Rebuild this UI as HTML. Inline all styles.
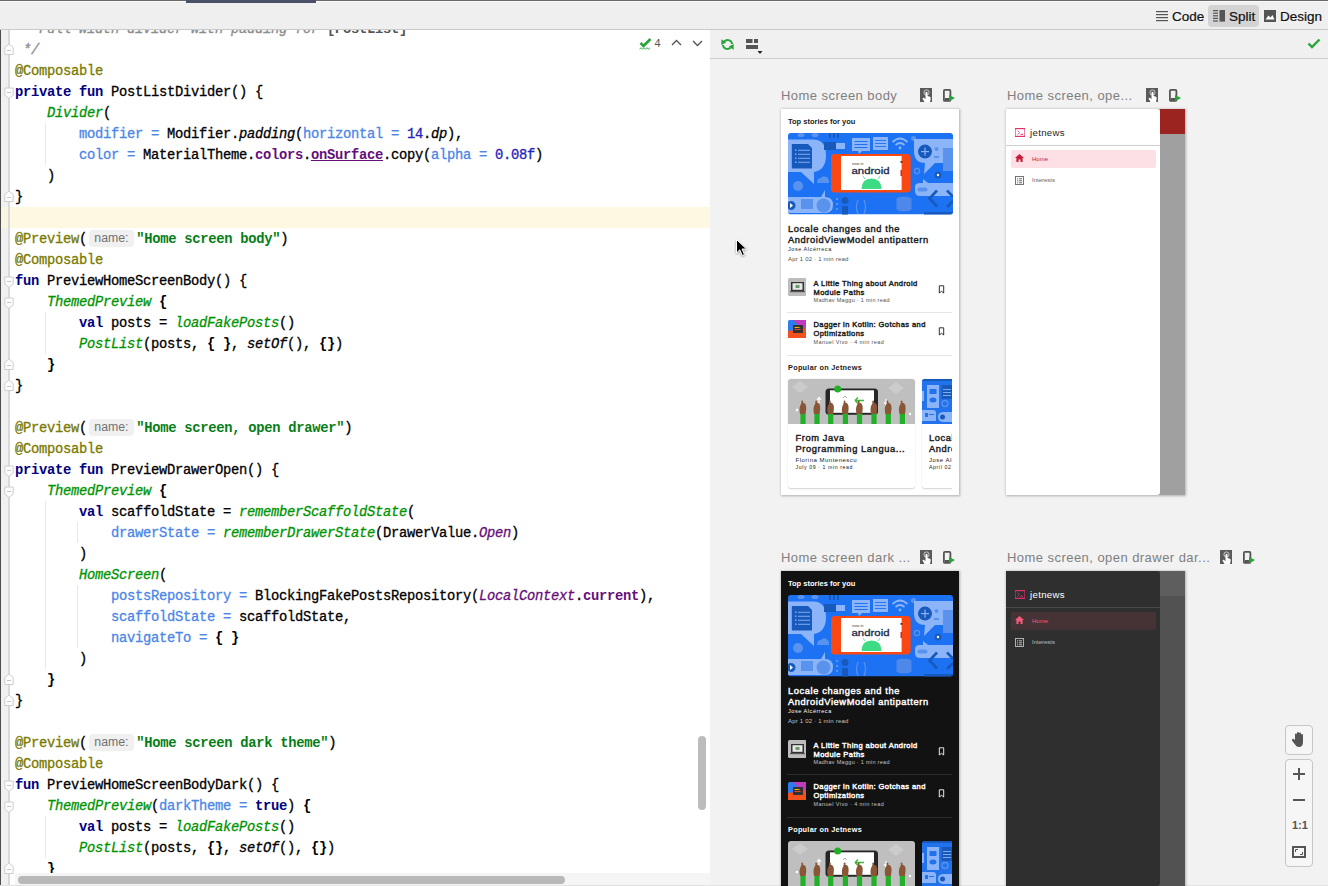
<!DOCTYPE html>
<html><head><meta charset="utf-8">
<style>
*{margin:0;padding:0;box-sizing:border-box}
html,body{width:1328px;height:886px;overflow:hidden;background:#f2f2f2;font-family:"Liberation Sans",sans-serif}
.a{position:absolute}
#topbar{position:absolute;left:0;top:0;width:1328px;height:30px;background:#efefef;border-top:1px solid #6a6a6a;border-bottom:1px solid #c9c9c9}
#tabind{position:absolute;left:186px;top:-1px;width:130px;height:3px;background:#4a5068}
#editor{position:absolute;left:0;top:29px;width:710px;height:857px;background:#fff;overflow:hidden}
#lborder{position:absolute;left:0;top:0;width:1px;height:886px;background:#4d4d4d}
#gutter{position:absolute;left:1px;top:29px;width:8px;height:857px;background:#f0f0f0}
#gline{position:absolute;left:8.4px;top:29px;width:1.2px;height:857px;background:#d9d9d9}
#code{position:absolute;left:15px;top:18.5px;font-family:"Liberation Mono",monospace;font-size:13.8px;letter-spacing:-0.28px;line-height:21px;color:#000;-webkit-text-stroke:0.3px}
.ln{height:21px;white-space:pre}
.cm{color:#8c8c8c;font-style:italic}
.an{color:#7a7a00}
.kw{color:#000080;font-weight:bold;-webkit-text-stroke:0}
.fc{color:#009400;font-style:italic}
.na{color:#4a86e8}
.nu{color:#2222bb}
.st{color:#067d17;font-weight:bold;-webkit-text-stroke:0}
.pr{color:#660e7a;font-weight:bold;-webkit-text-stroke:0}
.pi{color:#660e7a;font-style:italic}
.it{font-style:italic}
.b{font-weight:bold;-webkit-text-stroke:0}
.hint{display:inline-block;font-family:"Liberation Sans",sans-serif;font-size:12.3px;color:#727272;background:#f0f0f0;border-radius:4px;height:17px;line-height:17px;padding:0 5.3px;margin:0 2.5px 0 2px;vertical-align:1px;-webkit-text-stroke:0;letter-spacing:0}
#curline{position:absolute;left:1px;top:207px;width:709px;height:21px;background:#fdf8e2}
#ptool{position:absolute;left:710px;top:30px;width:618px;height:29px;background:#f0f0f0;border-bottom:1px solid #cdcdcd}
.lbl{position:absolute;font-size:13px;line-height:15px;color:#7f7f7f;white-space:nowrap;letter-spacing:0.45px}
.frame{position:absolute;overflow:hidden;box-shadow:0 0 2.5px 0.5px rgba(0,0,0,0.28)}
.t{position:absolute;white-space:nowrap;line-height:1}
.sb{font-weight:bold}
.sm{font-weight:normal;-webkit-text-stroke:0.42px}
</style></head><body>
<div id="editor"></div>
<div id="curline"></div>
<div class="a" style="left:45px;top:123px;width:1px;height:42px;background:#e8e8e8"></div>
<div class="a" style="left:45px;top:312px;width:1px;height:42px;background:#e8e8e8"></div>
<div class="a" style="left:45px;top:501px;width:1px;height:168px;background:#e8e8e8"></div>
<div class="a" style="left:77px;top:522px;width:1px;height:21px;background:#e8e8e8"></div>
<div class="a" style="left:77px;top:585px;width:1px;height:63px;background:#e8e8e8"></div>
<div class="a" style="left:45px;top:816px;width:1px;height:42px;background:#e8e8e8"></div>
<div id="code">
<div class="ln"><span class="cm"> * Full width divider with padding for </span><span class="cm b" style="color:#555;font-style:normal">[PostList]</span></div>
<div class="ln"><span class="cm"> */</span></div>
<div class="ln"><span class="an">@Composable</span></div>
<div class="ln"><span class="kw">private fun</span> PostListDivider() {</div>
<div class="ln">    <span class="fc">Divider</span>(</div>
<div class="ln">        <span class="na">modifier =</span> Modifier.<span class="it">padding</span>(<span class="na">horizontal =</span> <span class="nu">14</span>.<span class="it">dp</span>),</div>
<div class="ln">        <span class="na">color =</span> MaterialTheme.<span class="pr">colors</span>.<span class="pr" style="text-decoration:underline">onSurface</span>.copy(<span class="na">alpha =</span> <span class="nu">0.08f</span>)</div>
<div class="ln">    )</div>
<div class="ln">}</div>
<div class="ln"></div>
<div class="ln"><span class="an">@Preview</span>(<span class="hint">name:</span><span class="st">"Home screen body"</span>)</div>
<div class="ln"><span class="an">@Composable</span></div>
<div class="ln"><span class="kw">fun</span> PreviewHomeScreenBody() {</div>
<div class="ln">    <span class="fc">ThemedPreview</span> <span class="b">{</span></div>
<div class="ln">        <span class="kw">val</span> posts = <span class="fc">loadFakePosts</span>()</div>
<div class="ln">        <span class="fc">PostList</span>(posts, <span class="b">{ }</span>, <span class="it">setOf</span>(), <span class="b">{}</span>)</div>
<div class="ln">    <span class="b">}</span></div>
<div class="ln">}</div>
<div class="ln"></div>
<div class="ln"><span class="an">@Preview</span>(<span class="hint">name:</span><span class="st">"Home screen, open drawer"</span>)</div>
<div class="ln"><span class="an">@Composable</span></div>
<div class="ln"><span class="kw">private fun</span> PreviewDrawerOpen() {</div>
<div class="ln">    <span class="fc">ThemedPreview</span> <span class="b">{</span></div>
<div class="ln">        <span class="kw">val</span> scaffoldState = <span class="fc">rememberScaffoldState</span>(</div>
<div class="ln">            <span class="na">drawerState =</span> <span class="fc">rememberDrawerState</span>(DrawerValue.<span class="pi">Open</span>)</div>
<div class="ln">        )</div>
<div class="ln">        <span class="fc">HomeScreen</span>(</div>
<div class="ln">            <span class="na">postsRepository =</span> BlockingFakePostsRepository(<span class="pi">LocalContext</span>.<span class="pr">current</span>),</div>
<div class="ln">            <span class="na">scaffoldState =</span> scaffoldState,</div>
<div class="ln">            <span class="na">navigateTo =</span> <span class="b">{ }</span></div>
<div class="ln">        )</div>
<div class="ln">    <span class="b">}</span></div>
<div class="ln">}</div>
<div class="ln"></div>
<div class="ln"><span class="an">@Preview</span>(<span class="hint">name:</span><span class="st">"Home screen dark theme"</span>)</div>
<div class="ln"><span class="an">@Composable</span></div>
<div class="ln"><span class="kw">fun</span> PreviewHomeScreenBodyDark() {</div>
<div class="ln">    <span class="fc">ThemedPreview</span>(<span class="na">darkTheme =</span> <span class="kw">true</span>) <span class="b">{</span></div>
<div class="ln">        <span class="kw">val</span> posts = <span class="fc">loadFakePosts</span>()</div>
<div class="ln">        <span class="fc">PostList</span>(posts, <span class="b">{}</span>, <span class="it">setOf</span>(), <span class="b">{}</span>)</div>
<div class="ln">    <span class="b">}</span></div>
</div>

<div id="gutter"></div>
<div id="curg" class="a" style="left:1px;top:207px;width:8px;height:21px;background:#f9f5e3"></div>
<div id="gline"></div>
<svg class="a" style="left:4px;top:42.8px" width="10" height="13" viewBox="0 0 10 13"><path d="M0.8 11.5 H9.2 V4.5 L5 1 L0.8 4.5 Z" fill="#fdfdfd" stroke="#cdcdcd" stroke-width="1"/><rect x="3" y="7" width="4" height="1" fill="#c4c4c4"/></svg>
<svg class="a" style="left:4px;top:87px" width="10" height="13" viewBox="0 0 10 13"><path d="M0.8 1 H9.2 V8 L5 11.5 L0.8 8 Z" fill="#fdfdfd" stroke="#cdcdcd" stroke-width="1"/><rect x="3" y="5" width="4" height="1" fill="#c4c4c4"/></svg>
<svg class="a" style="left:4px;top:189.8px" width="10" height="13" viewBox="0 0 10 13"><path d="M0.8 11.5 H9.2 V4.5 L5 1 L0.8 4.5 Z" fill="#fdfdfd" stroke="#cdcdcd" stroke-width="1"/><rect x="3" y="7" width="4" height="1" fill="#c4c4c4"/></svg>
<svg class="a" style="left:4px;top:276px" width="10" height="13" viewBox="0 0 10 13"><path d="M0.8 1 H9.2 V8 L5 11.5 L0.8 8 Z" fill="#fdfdfd" stroke="#cdcdcd" stroke-width="1"/><rect x="3" y="5" width="4" height="1" fill="#c4c4c4"/></svg>
<svg class="a" style="left:4px;top:297px" width="10" height="13" viewBox="0 0 10 13"><path d="M0.8 1 H9.2 V8 L5 11.5 L0.8 8 Z" fill="#fdfdfd" stroke="#cdcdcd" stroke-width="1"/><rect x="3" y="5" width="4" height="1" fill="#c4c4c4"/></svg>
<svg class="a" style="left:4px;top:357.8px" width="10" height="13" viewBox="0 0 10 13"><path d="M0.8 11.5 H9.2 V4.5 L5 1 L0.8 4.5 Z" fill="#fdfdfd" stroke="#cdcdcd" stroke-width="1"/><rect x="3" y="7" width="4" height="1" fill="#c4c4c4"/></svg>
<svg class="a" style="left:4px;top:378.8px" width="10" height="13" viewBox="0 0 10 13"><path d="M0.8 11.5 H9.2 V4.5 L5 1 L0.8 4.5 Z" fill="#fdfdfd" stroke="#cdcdcd" stroke-width="1"/><rect x="3" y="7" width="4" height="1" fill="#c4c4c4"/></svg>
<svg class="a" style="left:4px;top:465px" width="10" height="13" viewBox="0 0 10 13"><path d="M0.8 1 H9.2 V8 L5 11.5 L0.8 8 Z" fill="#fdfdfd" stroke="#cdcdcd" stroke-width="1"/><rect x="3" y="5" width="4" height="1" fill="#c4c4c4"/></svg>
<svg class="a" style="left:4px;top:486px" width="10" height="13" viewBox="0 0 10 13"><path d="M0.8 1 H9.2 V8 L5 11.5 L0.8 8 Z" fill="#fdfdfd" stroke="#cdcdcd" stroke-width="1"/><rect x="3" y="5" width="4" height="1" fill="#c4c4c4"/></svg>
<svg class="a" style="left:4px;top:672.8px" width="10" height="13" viewBox="0 0 10 13"><path d="M0.8 11.5 H9.2 V4.5 L5 1 L0.8 4.5 Z" fill="#fdfdfd" stroke="#cdcdcd" stroke-width="1"/><rect x="3" y="7" width="4" height="1" fill="#c4c4c4"/></svg>
<svg class="a" style="left:4px;top:693.8px" width="10" height="13" viewBox="0 0 10 13"><path d="M0.8 11.5 H9.2 V4.5 L5 1 L0.8 4.5 Z" fill="#fdfdfd" stroke="#cdcdcd" stroke-width="1"/><rect x="3" y="7" width="4" height="1" fill="#c4c4c4"/></svg>
<svg class="a" style="left:4px;top:780px" width="10" height="13" viewBox="0 0 10 13"><path d="M0.8 1 H9.2 V8 L5 11.5 L0.8 8 Z" fill="#fdfdfd" stroke="#cdcdcd" stroke-width="1"/><rect x="3" y="5" width="4" height="1" fill="#c4c4c4"/></svg>
<svg class="a" style="left:4px;top:801px" width="10" height="13" viewBox="0 0 10 13"><path d="M0.8 1 H9.2 V8 L5 11.5 L0.8 8 Z" fill="#fdfdfd" stroke="#cdcdcd" stroke-width="1"/><rect x="3" y="5" width="4" height="1" fill="#c4c4c4"/></svg>
<svg class="a" style="left:4px;top:861.8px" width="10" height="13" viewBox="0 0 10 13"><path d="M0.8 11.5 H9.2 V4.5 L5 1 L0.8 4.5 Z" fill="#fdfdfd" stroke="#cdcdcd" stroke-width="1"/><rect x="3" y="7" width="4" height="1" fill="#c4c4c4"/></svg>
<div id="lborder"></div>
<svg class="a" style="left:639px;top:38px" width="13" height="12" viewBox="0 0 13 12">
<path d="M1.5 5 L4.5 8 L11.5 1" stroke="#27a33a" stroke-width="2.6" fill="none"/>
<path d="M0.5 11 L2 9.8 L3.5 11 L5 9.8 L6.5 11 L8 9.8 L9.5 11 L11 9.8" stroke="#27a33a" stroke-width="0.9" fill="none"/></svg>
<div class="t" style="left:654.5px;top:38px;font-size:11px;color:#555">4</div>
<svg class="a" style="left:671px;top:39px" width="11" height="7" viewBox="0 0 11 7"><path d="M1 6 L5.5 1.5 L10 6" stroke="#555" stroke-width="1.4" fill="none"/></svg>
<svg class="a" style="left:692px;top:40px" width="11" height="7" viewBox="0 0 11 7"><path d="M1 1 L5.5 5.5 L10 1" stroke="#555" stroke-width="1.4" fill="none"/></svg>
<div class="a" style="left:698px;top:736px;width:8px;height:74px;background:#bcbcbc;border-radius:4px"></div>
<div class="a" style="left:15px;top:873px;width:695px;height:13px;background:#f5f5f5"></div>
<div class="a" style="left:18px;top:876px;width:547px;height:8px;background:#b9b9b9;border-radius:4px"></div>
<div class="a" style="left:0;top:885px;width:1328px;height:1px;background:#e2e2e2"></div>

<div id="topbar"><div class="a" style="left:0;top:0;width:1328px;height:1px;background:#fbfbfb"></div><div id="tabind"></div></div>
<svg class="a" style="left:1156px;top:11px" width="13" height="11" viewBox="0 0 13 11">
<rect x="0" y="0" width="12" height="1.2" fill="#555"/><rect x="0" y="3" width="12" height="1.2" fill="#555"/><rect x="0" y="6" width="12" height="1.2" fill="#555"/><rect x="0" y="9" width="12" height="1.2" fill="#555"/></svg>
<div class="t" style="left:1172px;top:10px;font-size:13.5px;color:#111;-webkit-text-stroke:0.2px">Code</div>
<div class="a" style="left:1208px;top:5px;width:51px;height:21.5px;background:#d3d3d3;border-radius:4px"></div>
<svg class="a" style="left:1213px;top:10px" width="13" height="12" viewBox="0 0 13 12">
<rect x="0" y="0" width="5" height="1.2" fill="#555"/><rect x="0" y="2.6" width="5" height="1.2" fill="#555"/><rect x="0" y="5.2" width="5" height="1.2" fill="#555"/><rect x="0" y="7.8" width="5" height="1.2" fill="#555"/><rect x="0" y="10.4" width="5" height="1.2" fill="#555"/>
<rect x="6.5" y="0" width="5.5" height="11.6" fill="#555"/></svg>
<div class="t" style="left:1229px;top:10px;font-size:13.5px;color:#111;-webkit-text-stroke:0.2px">Split</div>
<svg class="a" style="left:1264px;top:10px" width="13" height="12" viewBox="0 0 13 12">
<rect x="0" y="0" width="12" height="12" fill="#555"/><path d="M1.5 9.5 L4.5 5.5 L6.5 7.5 L8.5 5 L10.5 9.5 Z" fill="#fff"/></svg>
<div class="t" style="left:1280px;top:10px;font-size:13.5px;color:#111;-webkit-text-stroke:0.2px">Design</div>

<div id="ptool"></div>
<svg class="a" style="left:721px;top:37.5px" width="13" height="13" viewBox="0 0 13 13">
<path d="M2.6 4.2 A4.6 4.6 0 0 1 11.1 6" stroke="#27a33a" stroke-width="1.9" fill="none"/>
<path d="M10.4 8.8 A4.6 4.6 0 0 1 1.9 7" stroke="#27a33a" stroke-width="1.9" fill="none"/>
<path d="M0.3 1.2 L5.2 4.6 L0.3 7 Z" fill="#27a33a"/>
<path d="M12.7 11.8 L7.8 8.4 L12.7 6 Z" fill="#27a33a"/>
</svg>
<svg class="a" style="left:745.5px;top:39px" width="18" height="16" viewBox="0 0 18 16">
<rect x="0" y="0" width="6.5" height="4" fill="#555"/><rect x="8" y="0" width="4" height="4" fill="#555"/>
<rect x="0" y="6" width="12" height="4" fill="#555"/>
<path d="M11.5 12 L16.5 12 L14 15 Z" fill="#222"/>
</svg>
<svg class="a" style="left:1307px;top:38px" width="14" height="11" viewBox="0 0 14 11"><path d="M1.5 5.5 L5 9 L12.5 1.5" stroke="#27a33a" stroke-width="2.4" fill="none"/></svg>
<div class="lbl" style="left:781px;top:88px">Home screen body</div>
<svg class="a" style="left:920px;top:88px" width="13" height="14" viewBox="0 0 13 14">
<rect x="0" y="0" width="12" height="14" fill="#5a5a5a"/>
<circle cx="6.5" cy="4.5" r="2.6" fill="none" stroke="#e6e6e6" stroke-width="0.8"/>
<path d="M5.5 4.2 Q6.5 3.2 7.5 4.2 V8 L10 8.8 Q11 9.2 10.6 11 L10 14 H4.5 L2.5 10.5 Q2.8 9.5 4 10 L5.5 11 Z" fill="#ffffff"/>
</svg>
<svg class="a" style="left:943px;top:89px" width="13" height="13" viewBox="0 0 13 13">
<rect x="0.9" y="0.9" width="6.5" height="11" rx="1" fill="none" stroke="#555" stroke-width="1.8"/>
<rect x="2" y="9" width="4" height="2.5" fill="#555"/>
<path d="M6 6 L12 9 L6 12.5 Z" fill="#27a33a"/>
</svg>
<div class="lbl" style="left:1007px;top:88px">Home screen, ope...</div>
<svg class="a" style="left:1146px;top:88px" width="13" height="14" viewBox="0 0 13 14">
<rect x="0" y="0" width="12" height="14" fill="#5a5a5a"/>
<circle cx="6.5" cy="4.5" r="2.6" fill="none" stroke="#e6e6e6" stroke-width="0.8"/>
<path d="M5.5 4.2 Q6.5 3.2 7.5 4.2 V8 L10 8.8 Q11 9.2 10.6 11 L10 14 H4.5 L2.5 10.5 Q2.8 9.5 4 10 L5.5 11 Z" fill="#ffffff"/>
</svg>
<svg class="a" style="left:1169px;top:89px" width="13" height="13" viewBox="0 0 13 13">
<rect x="0.9" y="0.9" width="6.5" height="11" rx="1" fill="none" stroke="#555" stroke-width="1.8"/>
<rect x="2" y="9" width="4" height="2.5" fill="#555"/>
<path d="M6 6 L12 9 L6 12.5 Z" fill="#27a33a"/>
</svg>
<div class="lbl" style="left:781px;top:550px">Home screen dark ...</div>
<svg class="a" style="left:920px;top:550px" width="13" height="14" viewBox="0 0 13 14">
<rect x="0" y="0" width="12" height="14" fill="#5a5a5a"/>
<circle cx="6.5" cy="4.5" r="2.6" fill="none" stroke="#e6e6e6" stroke-width="0.8"/>
<path d="M5.5 4.2 Q6.5 3.2 7.5 4.2 V8 L10 8.8 Q11 9.2 10.6 11 L10 14 H4.5 L2.5 10.5 Q2.8 9.5 4 10 L5.5 11 Z" fill="#ffffff"/>
</svg>
<svg class="a" style="left:943px;top:551px" width="13" height="13" viewBox="0 0 13 13">
<rect x="0.9" y="0.9" width="6.5" height="11" rx="1" fill="none" stroke="#555" stroke-width="1.8"/>
<rect x="2" y="9" width="4" height="2.5" fill="#555"/>
<path d="M6 6 L12 9 L6 12.5 Z" fill="#27a33a"/>
</svg>
<div class="lbl" style="left:1007px;top:550px">Home screen, open drawer dar...</div>
<svg class="a" style="left:1220px;top:550px" width="13" height="14" viewBox="0 0 13 14">
<rect x="0" y="0" width="12" height="14" fill="#5a5a5a"/>
<circle cx="6.5" cy="4.5" r="2.6" fill="none" stroke="#e6e6e6" stroke-width="0.8"/>
<path d="M5.5 4.2 Q6.5 3.2 7.5 4.2 V8 L10 8.8 Q11 9.2 10.6 11 L10 14 H4.5 L2.5 10.5 Q2.8 9.5 4 10 L5.5 11 Z" fill="#ffffff"/>
</svg>
<svg class="a" style="left:1243px;top:551px" width="13" height="13" viewBox="0 0 13 13">
<rect x="0.9" y="0.9" width="6.5" height="11" rx="1" fill="none" stroke="#555" stroke-width="1.8"/>
<rect x="2" y="9" width="4" height="2.5" fill="#555"/>
<path d="M6 6 L12 9 L6 12.5 Z" fill="#27a33a"/>
</svg>
<div class="frame" style="left:781px;top:109px;width:178px;height:386px;background:#ffffff">
<div class="t sb" style="left:7px;top:9px;font-size:7.5px;color:#1c1c1c">Top stories for you</div>
<svg class="a" style="left:6.5px;top:24px" width="165" height="81.5" viewBox="0 0 165 81.5">
<defs><clipPath id="hc246"><rect width="165" height="81.5" rx="3"/></clipPath></defs>
<g clip-path="url(#hc246)">
<rect width="165" height="81.5" fill="#1c72f3"/>
<ellipse cx="13" cy="2" rx="3.5" ry="2" fill="#5a93ee"/><ellipse cx="27" cy="2" rx="3.5" ry="2" fill="#5a93ee"/>
<rect x="41" y="0" width="2" height="5" fill="#185abc"/><rect x="45" y="0" width="2" height="5" fill="#185abc"/><rect x="49" y="0" width="2" height="5" fill="#185abc"/>
<path d="M0 6.5 H25 Q38 6.5 38 22 Q38 37 26 39 V51 L13 39 H0 Z" fill="#8cb4f8"/>
<path d="M3.8 11 H20 L24 15 V35.4 H3.8 Z" fill="#185abc"/>
<rect x="7" y="16.5" width="1.4" height="1.4" fill="#8cb4f8"/><rect x="10" y="16.8" width="12" height="0.9" fill="#8cb4f8"/>
<rect x="7" y="20.5" width="1.4" height="1.4" fill="#8cb4f8"/><rect x="10" y="20.8" width="12" height="0.9" fill="#8cb4f8"/>
<rect x="7" y="24.5" width="1.4" height="1.4" fill="#8cb4f8"/><rect x="10" y="24.8" width="12" height="0.9" fill="#8cb4f8"/>
<rect x="7" y="28.5" width="1.4" height="1.4" fill="#8cb4f8"/><rect x="10" y="28.8" width="12" height="0.9" fill="#8cb4f8"/>
<rect x="36" y="9" width="12" height="8" fill="#185abc"/><rect x="48" y="10" width="9" height="6" fill="#8cb4f8"/>
<path d="M64 5 H82 V18 H74 L71 21 L70 18 H64 Z" fill="#8cb4f8"/>
<rect x="66.5" y="8" width="13" height="1" fill="#1c72f3"/><rect x="66.5" y="11" width="13" height="1" fill="#1c72f3"/><rect x="66.5" y="14" width="13" height="1" fill="#1c72f3"/>
<rect x="85" y="4" width="15" height="13" fill="#8cb4f8"/>
<rect x="87" y="7" width="11" height="0.9" fill="#1c72f3"/><rect x="87" y="10" width="11" height="0.9" fill="#1c72f3"/><rect x="87" y="13" width="11" height="0.9" fill="#1c72f3"/>
<path d="M104.5 9 Q112 2 119.5 9" stroke="#8cb4f8" stroke-width="1.8" fill="none"/><path d="M107.5 12 Q112 8 116.5 12" stroke="#8cb4f8" stroke-width="1.8" fill="none"/><circle cx="112" cy="15" r="1.4" fill="#8cb4f8"/>
<circle cx="125.5" cy="5.5" r="2.5" fill="#5a93ee"/>
<circle cx="10" cy="53" r="5" fill="#5a93ee"/>
<path d="M29 50 Q29 45 33 45 Q35 42 38 44 Q41 44 41 50 Z" fill="#5a93ee"/>
<path d="M0 64 H33 L37 57 V64 Q45 64 45 72 Q45 80 37 80 H0 Z" fill="#8cb4f8"/>
<circle cx="3" cy="72.5" r="4.5" fill="#185abc"/><path d="M2 70 L5 72.5 L2 75 Z" fill="#fff"/>
<rect x="13" y="66" width="12" height="10" fill="#5a93ee"/>
<circle cx="35.5" cy="72.5" r="7" fill="#5a93ee"/>
<circle cx="57" cy="67.5" r="3.5" fill="#185abc"/><rect x="54" y="73" width="6" height="9" fill="#185abc"/>
<rect x="48" y="65" width="2" height="2" fill="#5a93ee"/><rect x="48" y="70" width="2" height="2" fill="#5a93ee"/><rect x="48" y="75" width="2" height="2" fill="#5a93ee"/>
<path d="M70 67 Q67 74 70 81" stroke="#5a93ee" stroke-width="1.2" fill="none"/><path d="M76 67 Q79 74 76 81" stroke="#5a93ee" stroke-width="1.2" fill="none"/>
<path d="M126 6 H165 V30 H147 L136 41 L137 30 Q126 30 126 18 Z" fill="#8cb4f8"/>
<circle cx="137" cy="18.6" r="7" fill="#185abc"/><rect x="133" y="18" width="8" height="1.2" fill="#8cb4f8"/><rect x="136.4" y="14.6" width="1.2" height="8" fill="#8cb4f8"/>
<circle cx="148.5" cy="16" r="2" fill="#5a93ee"/><rect x="146" y="23" width="5" height="2" fill="#5a93ee"/>
<rect x="155" y="15" width="10" height="23" fill="#5a93ee"/>
<circle cx="129" cy="38" r="2.6" fill="none" stroke="#5a93ee" stroke-width="1.2"/>
<circle cx="150" cy="42" r="3.5" fill="#185abc"/><circle cx="150" cy="42" r="1.2" fill="#fff"/>
<path d="M127 54 Q127 50 132 50 H135 L135 46 L140 50 H165 V63 H132 Q127 63 127 58 Z" fill="#8cb4f8"/>
<rect x="129.5" y="54.5" width="10" height="4" rx="2" fill="#5a93ee"/>
<path d="M149 57.5 L141.5 65.5 L149 73.5" stroke="#185abc" stroke-width="2.6" fill="none"/>
<path d="M159 57.5 L165 63.5 M165 68 L159 74" stroke="#185abc" stroke-width="2.6" fill="none"/>
<ellipse cx="116" cy="66" rx="7.5" ry="2.5" fill="#4d88ea"/><rect x="108.5" y="66" width="15" height="10" fill="#4d88ea"/><ellipse cx="116" cy="76" rx="7.5" ry="2.5" fill="#4d88ea"/>
<rect x="136" y="79" width="29" height="3" fill="#185abc"/>
<rect x="43" y="21" width="79.7" height="38.4" rx="4" fill="#fb4812"/>
<rect x="53" y="23" width="60.6" height="34" fill="#ffffff"/>
<rect x="112.5" y="28" width="1.8" height="1.8" fill="#333"/><rect x="112.5" y="37" width="1.5" height="6" fill="#b33"/>
<text x="64" y="31.5" font-family="Liberation Sans" font-size="4" fill="#444">now in</text>
<text x="63.5" y="40.5" font-family="Liberation Sans" font-size="9.2" fill="#1b2d45" stroke="#1b2d45" stroke-width="0.3" textLength="38" lengthAdjust="spacingAndGlyphs">android</text>
<path d="M73.5 56 Q73.5 45.5 83.5 45.5 Q93.5 45.5 93.5 56 Z" fill="#3ddc84"/>
<path d="M77 46 L75 43 M90 46 L92 43" stroke="#3ddc84" stroke-width="0.8"/>
</g></svg>
<div class="t sm" style="left:7px;top:115px;font-size:9.3px;line-height:10.6px;letter-spacing:0.6px;color:#1c1c1c">Locale changes and the<br>AndroidViewModel antipattern</div>
<div class="t" style="left:7px;top:138px;font-size:5.5px;letter-spacing:0.55px;color:#1c1c1c">Jose Alcérreca</div>
<div class="t" style="left:7px;top:146.5px;font-size:6px;letter-spacing:0.2px;color:#505050">Apr 1 02 · 1 min read</div>
<svg class="a" style="left:6.5px;top:168.7px" width="18.5" height="18" viewBox="0 0 18.5 18">
<rect width="18.5" height="18" rx="1.5" fill="#bdbdbd"/>
<rect x="3" y="4" width="13" height="9" fill="#333"/><rect x="4.5" y="5.2" width="10" height="6.6" fill="#e8e8e8"/>
<rect x="7.5" y="7" width="4" height="3" fill="#6a9a6a"/><rect x="2" y="13" width="15" height="1.2" fill="#555"/>
</svg>
<div class="t sm" style="left:32.5px;top:169.5px;font-size:7.5px;line-height:9px;letter-spacing:0.45px;color:#1c1c1c">A Little Thing about Android<br>Module Paths</div>
<div class="t" style="left:32.5px;top:189px;font-size:5.5px;letter-spacing:0.3px;color:#505050">Madhav Maggu · 1 min read</div>
<svg class="a" style="left:156.5px;top:175.5px" width="7" height="9" viewBox="0 0 7 9"><path d="M1.3 0.8 H5.7 V8 L3.5 6.3 L1.3 8 Z" fill="none" stroke="#1c1c1c" stroke-width="0.9"/></svg>
<div class="a" style="left:6px;top:203px;width:165px;height:1px;background:#e6e6e6"></div>
<svg class="a" style="left:6.5px;top:210.7px" width="18.5" height="18" viewBox="0 0 18.5 18">
<rect width="18.5" height="18" rx="1.5" fill="#2f7cf0"/>
<path d="M5 0 H18.5 V12 Z" fill="#c23bbd"/>
<path d="M0 11 L18.5 8 V18 H0 Z" fill="#f4511e"/>
<rect x="5" y="5" width="10" height="8" fill="#333"/><rect x="6.5" y="7" width="5" height="1" fill="#f4b400"/><rect x="6.5" y="9" width="6" height="1" fill="#ea4335"/>
</svg>
<div class="t sm" style="left:32.5px;top:212px;font-size:7.5px;line-height:8.5px;letter-spacing:0.42px;color:#1c1c1c">Dagger in Kotlin: Gotchas and<br>Optimizations</div>
<div class="t" style="left:32.5px;top:231px;font-size:5.5px;letter-spacing:0.4px;color:#505050">Manuel Vivo · 4 min read</div>
<svg class="a" style="left:156.5px;top:218px" width="7" height="9" viewBox="0 0 7 9"><path d="M1.3 0.8 H5.7 V8 L3.5 6.3 L1.3 8 Z" fill="none" stroke="#1c1c1c" stroke-width="0.9"/></svg>
<div class="a" style="left:6px;top:245.5px;width:165px;height:1px;background:#e6e6e6"></div>
<div class="t sb" style="left:7px;top:255px;font-size:7.3px;letter-spacing:0.28px;color:#1c1c1c">Popular on Jetnews</div>
<div class="a" style="left:6.5px;top:269.7px;width:127.5px;height:109px;background:#ffffff;border-radius:3px;box-shadow:0 0.5px 1.5px rgba(0,0,0,0.18);overflow:hidden">
<svg class="a" style="left:0;top:0" width="127.5" height="45" viewBox="0 0 127.5 45">
<rect width="127.5" height="45" fill="#bfbfbf"/>
<path d="M12 2 L20 8 L12 14 L4 8 Z M108 3 L116 9 L108 15 L100 9 Z" fill="#cccccc"/>
<rect x="37.5" y="9.5" width="52.5" height="26.2" rx="3.5" fill="#262626"/>
<rect x="42" y="11.3" width="44" height="22.5" fill="#ffffff"/>
<circle cx="49.7" cy="10" r="3.5" fill="#22b02a"/>
<path d="M67 21.5 H76 M67 21.5 L70 18.5 M67 21.5 L70 24.5" stroke="#3bbb3b" stroke-width="1.4" fill="none"/>
<path d="M55 19 L57 17 L59 19 M55 24 L57 26 L59 24" stroke="#999" stroke-width="0.8" fill="none"/>
<path d="M31 24 V19 M29 21 L31 18.5 L33 21 M98 20 V25 M96 23 L98 25.5 L100 23" stroke="#fff" stroke-width="1.1" fill="none"/>
<circle cx="9" cy="31" r="1.2" fill="#fff"/><circle cx="122" cy="35" r="1.2" fill="#fff"/>
<rect x="12.4" y="34.5" width="5.2" height="11" fill="#22b02a"/><path d="M12 35 Q10.8 29 12.5 26 Q14 23 16 24 Q18.5 25 18.2 30 L17.6 35 Z" fill="#8a5638"/><rect x="13.4" y="21.5" width="1.6" height="4" rx="0.8" fill="#8a5638"/><rect x="26.4" y="34.5" width="5.2" height="11" fill="#22b02a"/><path d="M26 35 Q24.8 29 26.5 26 Q28 23 30 24 Q32.5 25 32.2 30 L31.6 35 Z" fill="#8a5638"/><rect x="27.4" y="21.5" width="1.6" height="4" rx="0.8" fill="#8a5638"/><rect x="40.1" y="34.5" width="5.2" height="11" fill="#22b02a"/><path d="M39.7 35 Q38.5 29 40.2 26 Q41.7 23 43.7 24 Q46.2 25 45.900000000000006 30 L45.300000000000004 35 Z" fill="#8a5638"/><rect x="41.1" y="21.5" width="1.6" height="4" rx="0.8" fill="#8a5638"/><rect x="54.8" y="34.5" width="5.2" height="11" fill="#22b02a"/><path d="M54.4 35 Q53.199999999999996 29 54.9 26 Q56.4 23 58.4 24 Q60.9 25 60.6 30 L60.0 35 Z" fill="#8a5638"/><rect x="55.8" y="21.5" width="1.6" height="4" rx="0.8" fill="#8a5638"/><rect x="68.9" y="34.5" width="5.2" height="11" fill="#22b02a"/><path d="M68.5 35 Q67.3 29 69.0 26 Q70.5 23 72.5 24 Q75.0 25 74.7 30 L74.1 35 Z" fill="#8a5638"/><rect x="69.9" y="21.5" width="1.6" height="4" rx="0.8" fill="#8a5638"/><rect x="83.4" y="34.5" width="5.2" height="11" fill="#22b02a"/><path d="M83 35 Q81.8 29 83.5 26 Q85 23 87 24 Q89.5 25 89.2 30 L88.6 35 Z" fill="#8a5638"/><rect x="84.4" y="21.5" width="1.6" height="4" rx="0.8" fill="#8a5638"/><rect x="97.7" y="34.5" width="5.2" height="11" fill="#22b02a"/><path d="M97.3 35 Q96.1 29 97.8 26 Q99.3 23 101.3 24 Q103.8 25 103.5 30 L102.89999999999999 35 Z" fill="#8a5638"/><rect x="98.7" y="21.5" width="1.6" height="4" rx="0.8" fill="#8a5638"/><rect x="111.80000000000001" y="34.5" width="5.2" height="11" fill="#22b02a"/><path d="M111.4 35 Q110.2 29 111.9 26 Q113.4 23 115.4 24 Q117.9 25 117.60000000000001 30 L117.0 35 Z" fill="#8a5638"/><rect x="112.80000000000001" y="21.5" width="1.6" height="4" rx="0.8" fill="#8a5638"/>
</svg>
<div class="t sm" style="left:8px;top:54px;font-size:9.3px;line-height:11.4px;letter-spacing:0.6px;color:#1c1c1c">From Java<br>Programming Langua...</div>
<div class="t" style="left:8px;top:78px;font-size:6px;letter-spacing:0.5px;color:#1c1c1c">Florina Muntenescu</div>
<div class="t" style="left:8px;top:86.5px;font-size:5.2px;letter-spacing:0.6px;color:#1c1c1c">July 09 · 1 min read</div>
</div>
<div class="a" style="left:141px;top:269.7px;width:60px;height:109px;background:#ffffff;border-radius:3px;box-shadow:0 0.5px 1.5px rgba(0,0,0,0.18);overflow:hidden">
<svg class="a" style="left:0;top:0" width="60" height="45" viewBox="0 0 60 45">
<rect width="60" height="45" fill="#2272ec"/>
<rect x="0" y="0" width="60" height="2" fill="#185abc"/>
<rect x="5" y="6" width="12" height="23" fill="#8cb4f8"/>
<rect x="7.5" y="10" width="7" height="5" fill="#2272ec"/><ellipse cx="11" cy="21" rx="3.5" ry="2.5" fill="#2272ec"/>
<rect x="19.5" y="6" width="11" height="14" fill="#185abc"/>
<rect x="21" y="10" width="8" height="0.9" fill="#8cb4f8"/><rect x="21" y="13" width="8" height="0.9" fill="#8cb4f8"/><rect x="21" y="16" width="8" height="0.9" fill="#8cb4f8"/>
<rect x="0" y="12" width="2" height="10" fill="#8cb4f8"/>
<path d="M0 31 H11 Q14 31 14 34 V42 H0 Z" fill="#8cb4f8"/>
<rect x="3" y="34" width="3" height="4" fill="#2272ec"/><rect x="7" y="35" width="5" height="1" fill="#2272ec"/>
<path d="M16 38 Q16 33 22 33 H30 V43 H22 Q16 43 16 38 Z" fill="#8cb4f8"/>
<circle cx="20.5" cy="38" r="2.5" fill="#185abc"/>
<circle cx="23" cy="24.5" r="3" fill="none" stroke="#5a93ee" stroke-width="1.3"/>
</svg>
<div class="t sm" style="left:7px;top:54px;font-size:9.3px;line-height:11.4px;letter-spacing:0.6px;color:#1c1c1c">Locale<br>AndroidV</div>
<div class="t" style="left:7px;top:78px;font-size:6px;letter-spacing:0.5px;color:#1c1c1c">Jose Alcérreca</div>
<div class="t" style="left:7px;top:86.5px;font-size:5.2px;letter-spacing:0.6px;color:#1c1c1c">April 02 · 1 min read</div>
</div>
<div class="a" style="left:171px;top:260px;width:7px;height:130px;background:#ffffff"></div>
</div>
<div class="frame" style="left:1006px;top:109px;width:179px;height:386px;background:#a0a0a0">
<div class="a" style="left:154px;top:0;width:25px;height:25px;background:#9b2421"></div>
<div class="a" style="left:0;top:0;width:154px;height:386px;background:#ffffff;border-radius:0 3px 3px 0"></div>
<svg class="a" style="left:8.5px;top:19px" width="10" height="9" viewBox="0 0 10 9"><rect x="0" y="0" width="10" height="1.2" fill="#e0306a"/><rect x="0" y="7.8" width="10" height="1.2" fill="#e0306a"/><rect x="0" y="0" width="0.6" height="9" fill="#e0306a"/><rect x="9.4" y="0" width="0.6" height="9" fill="#e0306a"/><path d="M2.5 2.5 L4.5 4.5 L2.5 6.5" stroke="#d040a0" stroke-width="0.8" fill="none"/><rect x="5.5" y="5.8" width="2.5" height="1" fill="#e0306a"/></svg>
<div class="t" style="left:24px;top:19px;font-size:9.6px;letter-spacing:0.35px;color:#1c1c1c">jetnews</div>
<div class="a" style="left:0;top:36px;width:154px;height:1px;background:#d0d0d0"></div>
<div class="a" style="left:5px;top:40.5px;width:144.5px;height:18px;background:#fde0e5;border-radius:2px"></div>
<svg class="a" style="left:9px;top:45px" width="9" height="8" viewBox="0 0 9 8"><path d="M4.5 0 L9 4 H7.6 V8 H5.5 V5.5 H3.5 V8 H1.4 V4 H0 Z" fill="#c21f3a"/></svg>
<div class="t" style="left:26px;top:46.5px;font-size:6px;color:#c21f3a">Home</div>
<svg class="a" style="left:9px;top:66.5px" width="9" height="9" viewBox="0 0 9 9"><rect x="0.5" y="0.5" width="8" height="8" fill="none" stroke="#666666" stroke-width="0.9"/><rect x="2" y="2.3" width="1.2" height="1" fill="#666666"/><rect x="4" y="2.3" width="3" height="1" fill="#666666"/><rect x="2" y="4.3" width="1.2" height="1" fill="#666666"/><rect x="4" y="4.3" width="3" height="1" fill="#666666"/><rect x="2" y="6.3" width="1.2" height="1" fill="#666666"/><rect x="4" y="6.3" width="3" height="1" fill="#666666"/></svg>
<div class="t" style="left:26px;top:68px;font-size:6px;color:#666666">Interests</div>
</div>
<div class="frame" style="left:781px;top:571px;width:178px;height:315px;background:#121212">
<div class="t sb" style="left:7px;top:9px;font-size:7.5px;color:#ffffff">Top stories for you</div>
<svg class="a" style="left:6.5px;top:24px" width="165" height="81.5" viewBox="0 0 165 81.5">
<defs><clipPath id="hc246"><rect width="165" height="81.5" rx="3"/></clipPath></defs>
<g clip-path="url(#hc246)">
<rect width="165" height="81.5" fill="#1c72f3"/>
<ellipse cx="13" cy="2" rx="3.5" ry="2" fill="#5a93ee"/><ellipse cx="27" cy="2" rx="3.5" ry="2" fill="#5a93ee"/>
<rect x="41" y="0" width="2" height="5" fill="#185abc"/><rect x="45" y="0" width="2" height="5" fill="#185abc"/><rect x="49" y="0" width="2" height="5" fill="#185abc"/>
<path d="M0 6.5 H25 Q38 6.5 38 22 Q38 37 26 39 V51 L13 39 H0 Z" fill="#8cb4f8"/>
<path d="M3.8 11 H20 L24 15 V35.4 H3.8 Z" fill="#185abc"/>
<rect x="7" y="16.5" width="1.4" height="1.4" fill="#8cb4f8"/><rect x="10" y="16.8" width="12" height="0.9" fill="#8cb4f8"/>
<rect x="7" y="20.5" width="1.4" height="1.4" fill="#8cb4f8"/><rect x="10" y="20.8" width="12" height="0.9" fill="#8cb4f8"/>
<rect x="7" y="24.5" width="1.4" height="1.4" fill="#8cb4f8"/><rect x="10" y="24.8" width="12" height="0.9" fill="#8cb4f8"/>
<rect x="7" y="28.5" width="1.4" height="1.4" fill="#8cb4f8"/><rect x="10" y="28.8" width="12" height="0.9" fill="#8cb4f8"/>
<rect x="36" y="9" width="12" height="8" fill="#185abc"/><rect x="48" y="10" width="9" height="6" fill="#8cb4f8"/>
<path d="M64 5 H82 V18 H74 L71 21 L70 18 H64 Z" fill="#8cb4f8"/>
<rect x="66.5" y="8" width="13" height="1" fill="#1c72f3"/><rect x="66.5" y="11" width="13" height="1" fill="#1c72f3"/><rect x="66.5" y="14" width="13" height="1" fill="#1c72f3"/>
<rect x="85" y="4" width="15" height="13" fill="#8cb4f8"/>
<rect x="87" y="7" width="11" height="0.9" fill="#1c72f3"/><rect x="87" y="10" width="11" height="0.9" fill="#1c72f3"/><rect x="87" y="13" width="11" height="0.9" fill="#1c72f3"/>
<path d="M104.5 9 Q112 2 119.5 9" stroke="#8cb4f8" stroke-width="1.8" fill="none"/><path d="M107.5 12 Q112 8 116.5 12" stroke="#8cb4f8" stroke-width="1.8" fill="none"/><circle cx="112" cy="15" r="1.4" fill="#8cb4f8"/>
<circle cx="125.5" cy="5.5" r="2.5" fill="#5a93ee"/>
<circle cx="10" cy="53" r="5" fill="#5a93ee"/>
<path d="M29 50 Q29 45 33 45 Q35 42 38 44 Q41 44 41 50 Z" fill="#5a93ee"/>
<path d="M0 64 H33 L37 57 V64 Q45 64 45 72 Q45 80 37 80 H0 Z" fill="#8cb4f8"/>
<circle cx="3" cy="72.5" r="4.5" fill="#185abc"/><path d="M2 70 L5 72.5 L2 75 Z" fill="#fff"/>
<rect x="13" y="66" width="12" height="10" fill="#5a93ee"/>
<circle cx="35.5" cy="72.5" r="7" fill="#5a93ee"/>
<circle cx="57" cy="67.5" r="3.5" fill="#185abc"/><rect x="54" y="73" width="6" height="9" fill="#185abc"/>
<rect x="48" y="65" width="2" height="2" fill="#5a93ee"/><rect x="48" y="70" width="2" height="2" fill="#5a93ee"/><rect x="48" y="75" width="2" height="2" fill="#5a93ee"/>
<path d="M70 67 Q67 74 70 81" stroke="#5a93ee" stroke-width="1.2" fill="none"/><path d="M76 67 Q79 74 76 81" stroke="#5a93ee" stroke-width="1.2" fill="none"/>
<path d="M126 6 H165 V30 H147 L136 41 L137 30 Q126 30 126 18 Z" fill="#8cb4f8"/>
<circle cx="137" cy="18.6" r="7" fill="#185abc"/><rect x="133" y="18" width="8" height="1.2" fill="#8cb4f8"/><rect x="136.4" y="14.6" width="1.2" height="8" fill="#8cb4f8"/>
<circle cx="148.5" cy="16" r="2" fill="#5a93ee"/><rect x="146" y="23" width="5" height="2" fill="#5a93ee"/>
<rect x="155" y="15" width="10" height="23" fill="#5a93ee"/>
<circle cx="129" cy="38" r="2.6" fill="none" stroke="#5a93ee" stroke-width="1.2"/>
<circle cx="150" cy="42" r="3.5" fill="#185abc"/><circle cx="150" cy="42" r="1.2" fill="#fff"/>
<path d="M127 54 Q127 50 132 50 H135 L135 46 L140 50 H165 V63 H132 Q127 63 127 58 Z" fill="#8cb4f8"/>
<rect x="129.5" y="54.5" width="10" height="4" rx="2" fill="#5a93ee"/>
<path d="M149 57.5 L141.5 65.5 L149 73.5" stroke="#185abc" stroke-width="2.6" fill="none"/>
<path d="M159 57.5 L165 63.5 M165 68 L159 74" stroke="#185abc" stroke-width="2.6" fill="none"/>
<ellipse cx="116" cy="66" rx="7.5" ry="2.5" fill="#4d88ea"/><rect x="108.5" y="66" width="15" height="10" fill="#4d88ea"/><ellipse cx="116" cy="76" rx="7.5" ry="2.5" fill="#4d88ea"/>
<rect x="136" y="79" width="29" height="3" fill="#185abc"/>
<rect x="43" y="21" width="79.7" height="38.4" rx="4" fill="#fb4812"/>
<rect x="53" y="23" width="60.6" height="34" fill="#ffffff"/>
<rect x="112.5" y="28" width="1.8" height="1.8" fill="#333"/><rect x="112.5" y="37" width="1.5" height="6" fill="#b33"/>
<text x="64" y="31.5" font-family="Liberation Sans" font-size="4" fill="#444">now in</text>
<text x="63.5" y="40.5" font-family="Liberation Sans" font-size="9.2" fill="#1b2d45" stroke="#1b2d45" stroke-width="0.3" textLength="38" lengthAdjust="spacingAndGlyphs">android</text>
<path d="M73.5 56 Q73.5 45.5 83.5 45.5 Q93.5 45.5 93.5 56 Z" fill="#3ddc84"/>
<path d="M77 46 L75 43 M90 46 L92 43" stroke="#3ddc84" stroke-width="0.8"/>
</g></svg>
<div class="t sm" style="left:7px;top:115px;font-size:9.3px;line-height:10.6px;letter-spacing:0.6px;color:#ffffff">Locale changes and the<br>AndroidViewModel antipattern</div>
<div class="t" style="left:7px;top:138px;font-size:5.5px;letter-spacing:0.55px;color:#ffffff">Jose Alcérreca</div>
<div class="t" style="left:7px;top:146.5px;font-size:6px;letter-spacing:0.2px;color:#c4c4c4">Apr 1 02 · 1 min read</div>
<svg class="a" style="left:6.5px;top:168.7px" width="18.5" height="18" viewBox="0 0 18.5 18">
<rect width="18.5" height="18" rx="1.5" fill="#bdbdbd"/>
<rect x="3" y="4" width="13" height="9" fill="#333"/><rect x="4.5" y="5.2" width="10" height="6.6" fill="#e8e8e8"/>
<rect x="7.5" y="7" width="4" height="3" fill="#6a9a6a"/><rect x="2" y="13" width="15" height="1.2" fill="#555"/>
</svg>
<div class="t sm" style="left:32.5px;top:169.5px;font-size:7.5px;line-height:9px;letter-spacing:0.45px;color:#ffffff">A Little Thing about Android<br>Module Paths</div>
<div class="t" style="left:32.5px;top:189px;font-size:5.5px;letter-spacing:0.3px;color:#c4c4c4">Madhav Maggu · 1 min read</div>
<svg class="a" style="left:156.5px;top:175.5px" width="7" height="9" viewBox="0 0 7 9"><path d="M1.3 0.8 H5.7 V8 L3.5 6.3 L1.3 8 Z" fill="none" stroke="#ffffff" stroke-width="0.9"/></svg>
<div class="a" style="left:6px;top:203px;width:165px;height:1px;background:#2c2c2c"></div>
<svg class="a" style="left:6.5px;top:210.7px" width="18.5" height="18" viewBox="0 0 18.5 18">
<rect width="18.5" height="18" rx="1.5" fill="#2f7cf0"/>
<path d="M5 0 H18.5 V12 Z" fill="#c23bbd"/>
<path d="M0 11 L18.5 8 V18 H0 Z" fill="#f4511e"/>
<rect x="5" y="5" width="10" height="8" fill="#333"/><rect x="6.5" y="7" width="5" height="1" fill="#f4b400"/><rect x="6.5" y="9" width="6" height="1" fill="#ea4335"/>
</svg>
<div class="t sm" style="left:32.5px;top:212px;font-size:7.5px;line-height:8.5px;letter-spacing:0.42px;color:#ffffff">Dagger in Kotlin: Gotchas and<br>Optimizations</div>
<div class="t" style="left:32.5px;top:231px;font-size:5.5px;letter-spacing:0.4px;color:#c4c4c4">Manuel Vivo · 4 min read</div>
<svg class="a" style="left:156.5px;top:218px" width="7" height="9" viewBox="0 0 7 9"><path d="M1.3 0.8 H5.7 V8 L3.5 6.3 L1.3 8 Z" fill="none" stroke="#ffffff" stroke-width="0.9"/></svg>
<div class="a" style="left:6px;top:245.5px;width:165px;height:1px;background:#2c2c2c"></div>
<div class="t sb" style="left:7px;top:255px;font-size:7.3px;letter-spacing:0.28px;color:#ffffff">Popular on Jetnews</div>
<div class="a" style="left:6.5px;top:269.7px;width:127.5px;height:109px;background:#1e1e1e;border-radius:3px;box-shadow:0 0.5px 1.5px rgba(0,0,0,0.18);overflow:hidden">
<svg class="a" style="left:0;top:0" width="127.5" height="45" viewBox="0 0 127.5 45">
<rect width="127.5" height="45" fill="#bfbfbf"/>
<path d="M12 2 L20 8 L12 14 L4 8 Z M108 3 L116 9 L108 15 L100 9 Z" fill="#cccccc"/>
<rect x="37.5" y="9.5" width="52.5" height="26.2" rx="3.5" fill="#262626"/>
<rect x="42" y="11.3" width="44" height="22.5" fill="#ffffff"/>
<circle cx="49.7" cy="10" r="3.5" fill="#22b02a"/>
<path d="M67 21.5 H76 M67 21.5 L70 18.5 M67 21.5 L70 24.5" stroke="#3bbb3b" stroke-width="1.4" fill="none"/>
<path d="M55 19 L57 17 L59 19 M55 24 L57 26 L59 24" stroke="#999" stroke-width="0.8" fill="none"/>
<path d="M31 24 V19 M29 21 L31 18.5 L33 21 M98 20 V25 M96 23 L98 25.5 L100 23" stroke="#fff" stroke-width="1.1" fill="none"/>
<circle cx="9" cy="31" r="1.2" fill="#fff"/><circle cx="122" cy="35" r="1.2" fill="#fff"/>
<rect x="12.4" y="34.5" width="5.2" height="11" fill="#22b02a"/><path d="M12 35 Q10.8 29 12.5 26 Q14 23 16 24 Q18.5 25 18.2 30 L17.6 35 Z" fill="#8a5638"/><rect x="13.4" y="21.5" width="1.6" height="4" rx="0.8" fill="#8a5638"/><rect x="26.4" y="34.5" width="5.2" height="11" fill="#22b02a"/><path d="M26 35 Q24.8 29 26.5 26 Q28 23 30 24 Q32.5 25 32.2 30 L31.6 35 Z" fill="#8a5638"/><rect x="27.4" y="21.5" width="1.6" height="4" rx="0.8" fill="#8a5638"/><rect x="40.1" y="34.5" width="5.2" height="11" fill="#22b02a"/><path d="M39.7 35 Q38.5 29 40.2 26 Q41.7 23 43.7 24 Q46.2 25 45.900000000000006 30 L45.300000000000004 35 Z" fill="#8a5638"/><rect x="41.1" y="21.5" width="1.6" height="4" rx="0.8" fill="#8a5638"/><rect x="54.8" y="34.5" width="5.2" height="11" fill="#22b02a"/><path d="M54.4 35 Q53.199999999999996 29 54.9 26 Q56.4 23 58.4 24 Q60.9 25 60.6 30 L60.0 35 Z" fill="#8a5638"/><rect x="55.8" y="21.5" width="1.6" height="4" rx="0.8" fill="#8a5638"/><rect x="68.9" y="34.5" width="5.2" height="11" fill="#22b02a"/><path d="M68.5 35 Q67.3 29 69.0 26 Q70.5 23 72.5 24 Q75.0 25 74.7 30 L74.1 35 Z" fill="#8a5638"/><rect x="69.9" y="21.5" width="1.6" height="4" rx="0.8" fill="#8a5638"/><rect x="83.4" y="34.5" width="5.2" height="11" fill="#22b02a"/><path d="M83 35 Q81.8 29 83.5 26 Q85 23 87 24 Q89.5 25 89.2 30 L88.6 35 Z" fill="#8a5638"/><rect x="84.4" y="21.5" width="1.6" height="4" rx="0.8" fill="#8a5638"/><rect x="97.7" y="34.5" width="5.2" height="11" fill="#22b02a"/><path d="M97.3 35 Q96.1 29 97.8 26 Q99.3 23 101.3 24 Q103.8 25 103.5 30 L102.89999999999999 35 Z" fill="#8a5638"/><rect x="98.7" y="21.5" width="1.6" height="4" rx="0.8" fill="#8a5638"/><rect x="111.80000000000001" y="34.5" width="5.2" height="11" fill="#22b02a"/><path d="M111.4 35 Q110.2 29 111.9 26 Q113.4 23 115.4 24 Q117.9 25 117.60000000000001 30 L117.0 35 Z" fill="#8a5638"/><rect x="112.80000000000001" y="21.5" width="1.6" height="4" rx="0.8" fill="#8a5638"/>
</svg>
<div class="t sm" style="left:8px;top:54px;font-size:9.3px;line-height:11.4px;letter-spacing:0.6px;color:#ffffff">From Java<br>Programming Langua...</div>
<div class="t" style="left:8px;top:78px;font-size:6px;letter-spacing:0.5px;color:#ffffff">Florina Muntenescu</div>
<div class="t" style="left:8px;top:86.5px;font-size:5.2px;letter-spacing:0.6px;color:#ffffff">July 09 · 1 min read</div>
</div>
<div class="a" style="left:141px;top:269.7px;width:60px;height:109px;background:#1e1e1e;border-radius:3px;box-shadow:0 0.5px 1.5px rgba(0,0,0,0.18);overflow:hidden">
<svg class="a" style="left:0;top:0" width="60" height="45" viewBox="0 0 60 45">
<rect width="60" height="45" fill="#2272ec"/>
<rect x="0" y="0" width="60" height="2" fill="#185abc"/>
<rect x="5" y="6" width="12" height="23" fill="#8cb4f8"/>
<rect x="7.5" y="10" width="7" height="5" fill="#2272ec"/><ellipse cx="11" cy="21" rx="3.5" ry="2.5" fill="#2272ec"/>
<rect x="19.5" y="6" width="11" height="14" fill="#185abc"/>
<rect x="21" y="10" width="8" height="0.9" fill="#8cb4f8"/><rect x="21" y="13" width="8" height="0.9" fill="#8cb4f8"/><rect x="21" y="16" width="8" height="0.9" fill="#8cb4f8"/>
<rect x="0" y="12" width="2" height="10" fill="#8cb4f8"/>
<path d="M0 31 H11 Q14 31 14 34 V42 H0 Z" fill="#8cb4f8"/>
<rect x="3" y="34" width="3" height="4" fill="#2272ec"/><rect x="7" y="35" width="5" height="1" fill="#2272ec"/>
<path d="M16 38 Q16 33 22 33 H30 V43 H22 Q16 43 16 38 Z" fill="#8cb4f8"/>
<circle cx="20.5" cy="38" r="2.5" fill="#185abc"/>
<circle cx="23" cy="24.5" r="3" fill="none" stroke="#5a93ee" stroke-width="1.3"/>
</svg>
<div class="t sm" style="left:7px;top:54px;font-size:9.3px;line-height:11.4px;letter-spacing:0.6px;color:#ffffff">Locale<br>AndroidV</div>
<div class="t" style="left:7px;top:78px;font-size:6px;letter-spacing:0.5px;color:#ffffff">Jose Alcérreca</div>
<div class="t" style="left:7px;top:86.5px;font-size:5.2px;letter-spacing:0.6px;color:#ffffff">April 02 · 1 min read</div>
</div>
<div class="a" style="left:171px;top:260px;width:7px;height:130px;background:#121212"></div>
</div>
<div class="frame" style="left:1006px;top:571px;width:179px;height:315px;background:#525252">
<div class="a" style="left:154px;top:0;width:25px;height:25px;background:#5e5e5e"></div>
<div class="a" style="left:0;top:0;width:154px;height:315px;background:#2f2f2f;border-radius:0 3px 3px 0"></div>
<svg class="a" style="left:8.5px;top:19px" width="10" height="9" viewBox="0 0 10 9"><rect x="0" y="0" width="10" height="1.2" fill="#e0306a"/><rect x="0" y="7.8" width="10" height="1.2" fill="#e0306a"/><rect x="0" y="0" width="0.6" height="9" fill="#e0306a"/><rect x="9.4" y="0" width="0.6" height="9" fill="#e0306a"/><path d="M2.5 2.5 L4.5 4.5 L2.5 6.5" stroke="#d040a0" stroke-width="0.8" fill="none"/><rect x="5.5" y="5.8" width="2.5" height="1" fill="#e0306a"/></svg>
<div class="t" style="left:24px;top:19px;font-size:9.6px;letter-spacing:0.35px;color:#ffffff">jetnews</div>
<div class="a" style="left:0;top:36px;width:154px;height:1px;background:#4a4a4a"></div>
<div class="a" style="left:5px;top:40.5px;width:144.5px;height:18px;background:#463336;border-radius:2px"></div>
<svg class="a" style="left:9px;top:45px" width="9" height="8" viewBox="0 0 9 8"><path d="M4.5 0 L9 4 H7.6 V8 H5.5 V5.5 H3.5 V8 H1.4 V4 H0 Z" fill="#f25a7a"/></svg>
<div class="t" style="left:26px;top:46.5px;font-size:6px;color:#f25a7a">Home</div>
<svg class="a" style="left:9px;top:66.5px" width="9" height="9" viewBox="0 0 9 9"><rect x="0.5" y="0.5" width="8" height="8" fill="none" stroke="#bdbdbd" stroke-width="0.9"/><rect x="2" y="2.3" width="1.2" height="1" fill="#bdbdbd"/><rect x="4" y="2.3" width="3" height="1" fill="#bdbdbd"/><rect x="2" y="4.3" width="1.2" height="1" fill="#bdbdbd"/><rect x="4" y="4.3" width="3" height="1" fill="#bdbdbd"/><rect x="2" y="6.3" width="1.2" height="1" fill="#bdbdbd"/><rect x="4" y="6.3" width="3" height="1" fill="#bdbdbd"/></svg>
<div class="t" style="left:26px;top:68px;font-size:6px;color:#bdbdbd">Interests</div>
</div>
<div class="a" style="left:1285px;top:725px;width:28px;height:30px;border:1px solid #c6c6c6;border-radius:4px;background:#f6f6f6"></div>
<svg class="a" style="left:1291px;top:731px" width="16" height="17" viewBox="0 0 16 17">
<path d="M4 9 V3.5 Q4 2.5 5 2.5 Q6 2.5 6 3.5 V8 V2 Q6 1 7 1 Q8 1 8 2 V8 V2.5 Q8 1.5 9 1.5 Q10 1.5 10 2.5 V8 V4 Q10 3 11 3 Q12 3 12 4 V11 Q12 16 8 16 Q5.5 16 4 13.5 L1 9.5 Q0.5 8.5 1.5 8 Q2.5 7.5 3.2 8.5 Z" fill="#555"/>
</svg>
<div class="a" style="left:1285px;top:759px;width:28px;height:108px;border:1px solid #c6c6c6;border-radius:4px;background:#f6f6f6"></div>
<div class="a" style="left:1293px;top:773px;width:12px;height:2px;background:#555"></div>
<div class="a" style="left:1298px;top:768px;width:2px;height:12px;background:#555"></div>
<div class="a" style="left:1293px;top:799px;width:12px;height:2px;background:#555"></div>
<div class="t sb" style="left:1292px;top:820px;font-size:11px;color:#555">1:1</div>
<div class="a" style="left:1292px;top:846px;width:14px;height:12px;border:2px solid #555"></div>
<svg class="a" style="left:1294px;top:848px" width="10" height="8" viewBox="0 0 10 8"><path d="M1.5 4 V1.5 H4 M8.5 4 V6.5 H6" stroke="#555" stroke-width="1" fill="none"/></svg>
<svg class="a" style="left:735px;top:238px;filter:drop-shadow(0 1px 1px rgba(0,0,0,0.35))" width="14" height="20" viewBox="0 0 14 20">
<path d="M1.5 1.5 V15 L4.8 11.8 L7.3 17.5 L9.5 16.5 L7 11 H11.5 Z" fill="#000" stroke="#fff" stroke-width="1"/></svg>
</body></html>
